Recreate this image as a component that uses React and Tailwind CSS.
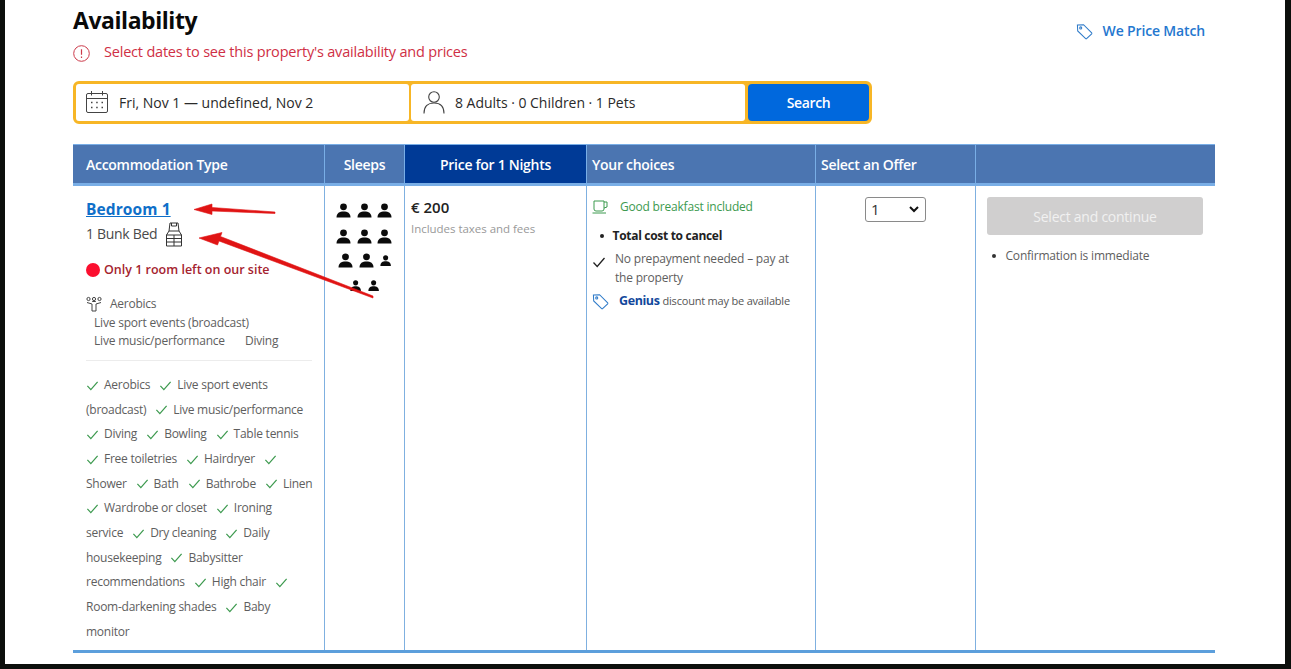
import React from "react";

const F = "font-['Open_Sans','Noto_Sans',sans-serif]";

function Check({ className = "text-[#3d9a4f]", size = 13 }) {
  return (
    <svg width={size} height={size} viewBox="0 0 14 14" fill="none" stroke="currentColor" strokeWidth="1.3" className={"inline-block " + className}>
      <path d="M1.5 7.5 L5.2 11.5 L12.5 3" />
    </svg>
  );
}

function Person({ s = 1 }) {
  const w = 15 * s;
  return (
    <svg width={w} height={w} viewBox="0 0 15 15" fill="#0b0b0b" className="block">
      <circle cx="7.5" cy="3.8" r="3.4" />
      <path d="M0.5 14.5 C0.5 10 3.5 8.4 7.5 8.4 C11.5 8.4 14.5 10 14.5 14.5 Z" />
    </svg>
  );
}

function Tag({ size = 18, color = "#2f7bc9" }) {
  return (
    <svg width={size} height={size} viewBox="0 0 18 18" fill="none" stroke={color} strokeWidth="1.1" className="block shrink-0">
      <path d="M1.5 2.2 L8 1.8 L16.6 10.4 Q17 11 16.6 11.5 L11.2 16.6 Q10.7 17 10.2 16.6 L1.8 8.4 Z" />
      <circle cx="5" cy="5.2" r="1.1" />
    </svg>
  );
}

const lines = [
  [["c", "Aerobics"], ["c", "Live sport events"]],
  [["t", "(broadcast)"], ["c", "Live music/performance"]],
  [["c", "Diving"], ["c", "Bowling"], ["c", "Table tennis"]],
  [["c", "Free toiletries"], ["c", "Hairdryer"], ["c", ""]],
  [["t", "Shower"], ["c", "Bath"], ["c", "Bathrobe"], ["c", "Linen"]],
  [["c", "Wardrobe or closet"], ["c", "Ironing"]],
  [["t", "service"], ["c", "Dry cleaning"], ["c", "Daily"]],
  [["t", "housekeeping"], ["c", "Babysitter"]],
  [["t", "recommendations"], ["c", "High chair"], ["c", ""]],
  [["t", "Room-darkening shades"], ["c", "Baby"]],
  [["t", "monitor"]],
];

function Head({ className = "", children }) {
  return <div className={"flex items-center text-[14px] font-semibold tracking-[-0.28px] text-white border-r border-[#79aee6] " + className}>{children}</div>;
}

function Cell({ className = "", children }) {
  return <div className={"border-r border-[#7fb0e0] " + className}>{children}</div>;
}

export default function App() {
  return (
    <div className={"h-[669px] w-[1291px] overflow-hidden bg-[#0c0f0c] pl-[5px] pr-[6px] pb-[5px] " + F}>
      <div className="relative h-full bg-white pl-[68px] pr-[65px]">
        <div className="flex justify-between">
          <div>
            <h1 className="pt-[4px] text-[23px] leading-[32px] font-bold tracking-[-0.45px] text-[#0a0a0a]">Availability</h1>
            <div className="mt-[6px] flex items-center text-[14.5px] leading-[20px] tracking-[-0.2px] text-[#cf2f45]">
              <svg width="17" height="17" viewBox="0 0 17 17" fill="none" stroke="#cc3b4b" strokeWidth="1" className="mt-[3px] mr-[14px]">
                <circle cx="8.5" cy="8.5" r="7.8" />
                <path d="M8.5 4.3 V9.8 M8.5 11.6 V12.9" strokeWidth="1.2" />
              </svg>
              <span>Select dates to see this property's availability and prices</span>
            </div>
          </div>
          <div className="mt-[21px] mr-[15px] flex h-[20px] items-center gap-[10px] text-[14px] leading-[20px] font-semibold tracking-[-0.15px] text-[#2477cf]">
            <Tag size={17} />
            We Price Match
          </div>
        </div>

        <div className="mt-[19px] flex h-[43px] w-[799px] gap-[2px] rounded-[6px] border-[3px] border-[#f7b626] bg-[#f7b626]">
          <div className="flex w-[333px] items-center rounded-[3px] bg-white pb-[1px] pl-[9px] text-[14px] text-[#2a2a2a]">
            <svg width="24" height="24" viewBox="0 0 24 24" fill="none" stroke="#444" strokeWidth="1" className="mr-[10px]">
              <rect x="1.5" y="3.5" width="21" height="19" rx="1.5" />
              <path d="M1.5 8.5 H22.5 M6.5 1 V5.5 M17.5 1 V5.5" />
              <path d="M6 12.5h1.5M11.2 12.5h1.5M16.5 12.5h1.5M6 17.5h1.5M11.2 17.5h1.5M16.5 17.5h1.5" strokeWidth="1.5" />
            </svg>
            Fri, Nov 1 — undefined, Nov 2
          </div>
          <div className="flex w-[334px] items-center rounded-[3px] bg-white pb-[1px] pl-[12px] text-[14px] tracking-[-0.03px] text-[#2a2a2a]">
            <svg width="22" height="24" viewBox="0 0 22 24" fill="none" stroke="#444" strokeWidth="1.1" className="mr-[10px]">
              <circle cx="11" cy="7" r="5.3" />
              <path d="M1 23.5 C1 16 5 13 11 13 C17 13 21 16 21 23.5" />
            </svg>
            8 Adults · 0 Children · 1 Pets
          </div>
          <div className="ml-[1px] flex flex-1 items-center justify-center rounded-[4px] bg-[#0068dd] pb-[1px] text-[14px] font-semibold tracking-[-0.35px] text-white">Search</div>
        </div>

        <div className="mt-[20px] w-[1142px]">
          <div className="grid h-[42px] grid-cols-[252px_80px_182px_229px_160px_239px] border-t border-b-[3px] border-[#79aee6] bg-[#4b75b1]">
            <Head className="pl-[13px]">Accommodation Type</Head>
            <Head className="justify-center">Sleeps</Head>
            <Head className="justify-center bg-[#003a96]">Price for 1 Nights</Head>
            <Head className="pl-[5px]">Your choices</Head>
            <Head className="pl-[5px]">Select an Offer</Head>
            <div />
          </div>

          <div className="grid h-[467px] grid-cols-[252px_80px_182px_229px_160px_239px] border-b-[3px] border-[#5c9fdc]">
            <Cell className="pl-[13px] pr-[12px]">
              <div className="mt-[13px] text-[15.5px] leading-[20px] font-bold tracking-[0.1px] text-[#0f6fc9] underline">Bedroom 1</div>
              <div className="mt-[3px] flex h-[24px] items-center text-[14px] leading-[24px] tracking-[-0.3px] text-[#4a4a4a]">
                1 Bunk Bed
                <svg width="18" height="25" viewBox="0 0 18 25" fill="none" stroke="#333" strokeWidth="1" className="ml-[8px]">
                  <path d="M5 1 H13 L14 9 H4 Z M6.5 1 V4 H11.5 V1" />
                  <path d="M4 9 L1.5 13 V24 H16.5 V13 L14 9 M1.5 13 H16.5 M1.5 16.5 H16.5 M1.5 20 H16.5 M9 13 V24" />
                </svg>
              </div>
              <div className="mt-[15px] flex items-center text-[12.5px] leading-[18px] font-semibold tracking-[0px] text-[#a5232f]">
                <span className="mr-[4px] size-[14px] rounded-full bg-[#fb0f2f]" />
                Only 1 room left on our site
              </div>
              <div className="mt-[16px] flex items-center text-[12px] leading-[18px] tracking-[-0.25px] text-[#5e5e5e]">
                <svg width="16" height="16" viewBox="0 0 16 16" fill="none" stroke="#444" strokeWidth="1" className="mr-[8px]">
                  <circle cx="2.5" cy="3" r="1.6" /><circle cx="8" cy="3" r="1.6" /><circle cx="13.5" cy="3" r="1.6" />
                  <path d="M1 6.5 L6 8 V15 H10 V8 L15 6.5 M6.2 5.5 H9.8" />
                </svg>
                Aerobics
              </div>
              <div className="mt-[1px] ml-[8px] text-[12px] leading-[18px] tracking-[-0.2px] text-[#5e5e5e]">
                <div>Live sport events (broadcast)</div>
                <div>Live music/performance<span className="ml-[20px]">Diving</span></div>
              </div>
              <div className="mt-[10px] border-t border-[#ececec]" />
              <div className="mt-[12px] text-[12px] leading-[24.65px] tracking-[-0.25px] whitespace-nowrap text-[#5e5e5e]">
                {lines.map((line, i) => (
                  <div key={i} className="flex items-center">
                    {line.map(([k, t], j) =>
                      k === "c" ? (
                        <span key={j} className={"flex items-center " + (j === 0 ? "" : "ml-[9px]")}>
                          <Check className="mr-[5px] text-[#3d9a4f]" />
                          {t}
                        </span>
                      ) : (
                        <span key={j}>{t}</span>
                      )
                    )}
                  </div>
                ))}
              </div>
            </Cell>

            <Cell className="pt-[17px]">
              <div className="ml-[11px] flex w-[56px] justify-between"><Person /><Person /><Person /></div>
              <div className="mt-[11px] ml-[11px] flex w-[56px] justify-between"><Person /><Person /><Person /></div>
              <div className="mt-[9px] ml-[13px] flex w-[53px] items-center justify-between"><Person /><Person /><Person s={0.75} /></div>
              <div className="mt-[12px] ml-[25px] flex w-[29px] justify-between"><Person s={0.75} /><Person s={0.75} /></div>
            </Cell>

            <Cell className="pl-[6px]">
              <div className="mt-[11px] text-[15px] leading-[20px] font-semibold text-[#222]">€ 200</div>
              <div className="mt-[2px] text-[11.5px] leading-[20px] tracking-[-0.03px] text-[#999]">Includes taxes and fees</div>
            </Cell>

            <Cell className="pl-[5px]">
              <div className="mt-[12px] flex items-center text-[12px] leading-[18px] tracking-[-0.2px] text-[#3d9a4f]">
                <svg width="16" height="14" viewBox="0 0 16 14" fill="none" stroke="#3d9a4f" strokeWidth="1" className="mr-[12px]">
                  <path d="M2 1 H12 V9 Q12 11 10 11 H4 Q2 11 2 9 Z M12 2 H15 V7 L12 8 M0.5 13 H14" />
                </svg>
                Good breakfast included
              </div>
              <div className="mt-[11px] flex items-center pl-[8px] text-[12px] leading-[18px] font-bold tracking-[-0.3px] text-[#222]">
                <span className="mr-[9px] size-[3.5px] rounded-full bg-[#222]" />
                Total cost to cancel
              </div>
              <div className="mt-[4px] flex text-[12px] leading-[19px] tracking-[-0.2px] text-[#5e5e5e]">
                <Check className="mt-[6px] mr-[9px] shrink-0 text-[#222]" size={14} />
                <span className="w-[190px]">No prepayment needed – pay at the property</span>
              </div>
              <div className="mt-[5px] flex items-center text-[11px] leading-[18px] tracking-[-0.2px] text-[#555]">
                <Tag size={17} />
                <span className="ml-[10px] mr-[3px] text-[12.5px] font-bold tracking-[-0.4px] text-[#12489c]">Genius</span>
                discount may be available
              </div>
            </Cell>

            <Cell>
              <div className="mt-[11px] ml-[49px] flex h-[25px] w-[61px] items-center justify-between rounded-[3px] border border-[#8a8a8a] pl-[5px] pr-[6px] text-[15px] text-[#333]">
                1
                <svg width="10" height="7" viewBox="0 0 10 7" fill="none" stroke="#111" strokeWidth="2"><path d="M1 1 L5 5 L9 1" /></svg>
              </div>
            </Cell>

            <div className="pl-[11px] pr-[12px]">
              <div className="mt-[11px] flex h-[38px] items-center justify-center rounded-[3px] bg-[#d0cfcf] text-[14px] tracking-[-0.25px] text-[#f1f1f1]">Select and continue</div>
              <div className="mt-[12px] flex items-center pl-[5px] text-[12px] leading-[18px] tracking-[-0.2px] text-[#5e5e5e]">
                <span className="mr-[10px] size-[3.5px] rounded-full bg-[#333]" />
                Confirmation is immediate
              </div>
            </div>
          </div>
        </div>

        <svg width="200" height="110" viewBox="190 200 200 110" className="pointer-events-none absolute left-[185px] top-[200px]">
          <path d="M275 213.5 L212 211 V214.5 L194 209.5 L212 204 V207.5 L275 212 Z" fill="#e01414" stroke="#e01414" strokeWidth="0.6" />
          <path d="M373 298 L219 241 L217.5 245 L199 238 L222 232.5 L220.5 236.5 L373 296 Z" fill="#e01414" stroke="#e01414" strokeWidth="0.6" />
        </svg>
      </div>
    </div>
  );
}
